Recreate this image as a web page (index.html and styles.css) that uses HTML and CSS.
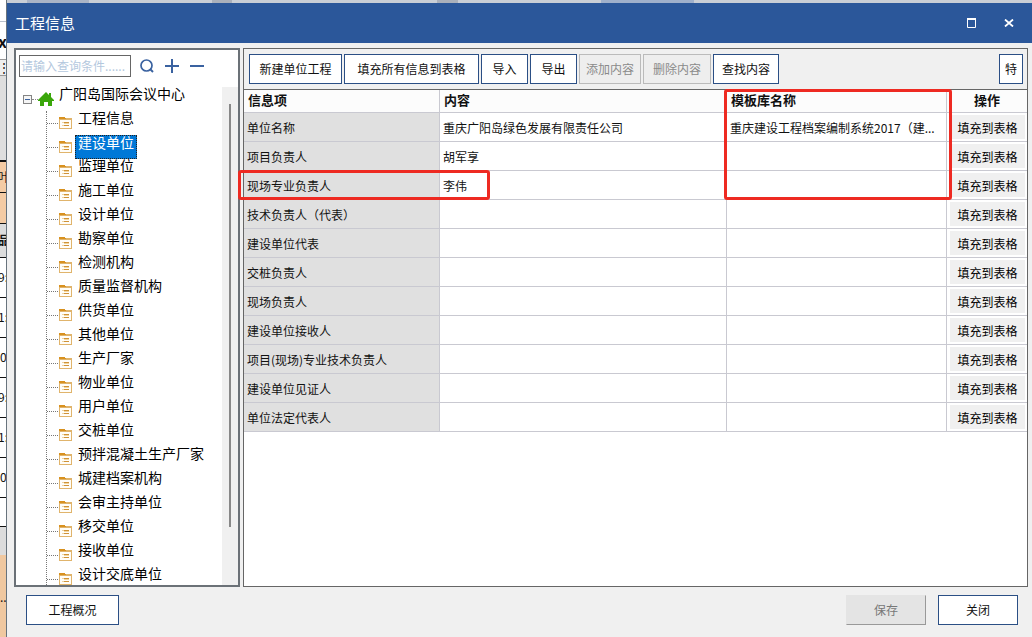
FILE: index.html
```html
<!DOCTYPE html>
<html lang="zh-CN">
<head>
<meta charset="utf-8">
<title>工程信息</title>
<link rel="stylesheet" href="styles.css">
</head>
<body>
<svg class="defs" aria-hidden="true">
  <symbol id="folder" viewBox="0 0 13 12">
    <path d="M0 1h13v11H0z" fill="#e0b46c"/>
    <path d="M6 0h7v1H6z" fill="#fff"/>
    <path d="M1 3h11v8H1z" fill="#fffdf8"/>
    <path d="M0 0h6v1h1v1H0z" fill="#d8911f"/>
    <path d="M3 5h2v1H3zM3 8h2v1H3z" fill="#edd3a2"/>
    <path d="M5 5h5v1H5zM5 8h5v1H5z" fill="#cf9238"/>
    <path d="M5 6h5v1H5z" fill="#f3d79c"/>
  </symbol>
</svg>
<div class="screen">
  <div class="sheet" aria-hidden="true">
    <div class="cell cell-top"></div>
    <div class="cell cell-name">x</div>
    <div class="cell cell-tool">⋮</div>
    <div class="cell cell-head">纟</div>
    <div class="cell cell-peach">叶</div>
    <div class="cell cell-peach"></div>
    <div class="cell cell-gray">品</div>
    <div class="cell">9:</div>
    <div class="cell">1:</div>
    <div class="cell cell-end">0</div>
    <div class="cell">9:</div>
    <div class="cell">1:</div>
    <div class="cell cell-end">0</div>
    <div class="cell cell-short"></div>
    <div class="cell cell-band"></div>
    <div class="cell cell-rest">..</div>
  </div>
  <div class="backdrop">
    <div class="ribbon"></div>
    <main class="dialog">
      <header class="titlebar">
        <h1 class="title">工程信息</h1>
        <button class="win-btn" type="button" aria-label="最大化"><svg width="10" height="10" viewBox="0 0 10 10"><path d="M1.500 1v8.500h8V1" fill="none" stroke="#fff"/><path d="M1 0h9v2H1z" fill="#fff"/></svg></button>
        <button class="win-btn" type="button" aria-label="关闭窗口"><svg width="10" height="8" viewBox="0 0 10 8"><path d="M1 .500l8 7M9 .500l-8 7" stroke="#fff" stroke-width="1.800"/></svg></button>
      </header>
      <div class="content">
        <aside class="side">
          <div class="search">
            <input class="search-box" type="text" placeholder="请输入查询条件......" aria-label="查询条件">
            <button class="icon-btn" type="button" aria-label="查询"><svg width="16" height="16" viewBox="0 0 16 16"><circle cx="7.500" cy="7.500" r="5.500" fill="none" stroke="#3a62a0" stroke-width="1.700"/><path d="M11 11l3 3" stroke="#3a62a0" stroke-width="2"/></svg></button>
            <button class="icon-btn" type="button" aria-label="展开"><svg width="16" height="16" viewBox="0 0 16 16"><path d="M1 8h14M8 1v14" stroke="#3a62a0" stroke-width="2"/></svg></button>
            <button class="icon-btn" type="button" aria-label="收起"><svg width="16" height="16" viewBox="0 0 16 16"><path d="M1 8h14" stroke="#3a62a0" stroke-width="2"/></svg></button>
          </div>
          <div class="tree-wrap">
            <div class="tree">
              <div class="root">
                <svg class="toggle" width="9" height="9" viewBox="0 0 9 9"><rect x=".5" y=".5" width="8" height="8" fill="#f5f5f5" stroke="#848484"/><path d="M2 4.500h5" stroke="#3a62a0"/></svg>
                <span class="root-link"></span>
                <svg class="home" width="16" height="16" viewBox="0 0 16 16"><path d="M8 1L0 9v1h2v5h4v-4h4v4h4v-5h2V9l-3-3V2h-2v2z" fill="#3aa60a"/></svg>
                <span class="root-name">广阳岛国际会议中心</span>
              </div>
              <ul class="items">
                <li class="item"><svg class="folder"><use href="#folder"/></svg><span class="name">工程信息</span></li>
                <li class="item"><svg class="folder"><use href="#folder"/></svg><span class="name selected">建设单位</span></li>
                <li class="item"><svg class="folder"><use href="#folder"/></svg><span class="name">监理单位</span></li>
                <li class="item"><svg class="folder"><use href="#folder"/></svg><span class="name">施工单位</span></li>
                <li class="item"><svg class="folder"><use href="#folder"/></svg><span class="name">设计单位</span></li>
                <li class="item"><svg class="folder"><use href="#folder"/></svg><span class="name">勘察单位</span></li>
                <li class="item"><svg class="folder"><use href="#folder"/></svg><span class="name">检测机构</span></li>
                <li class="item"><svg class="folder"><use href="#folder"/></svg><span class="name">质量监督机构</span></li>
                <li class="item"><svg class="folder"><use href="#folder"/></svg><span class="name">供货单位</span></li>
                <li class="item"><svg class="folder"><use href="#folder"/></svg><span class="name">其他单位</span></li>
                <li class="item"><svg class="folder"><use href="#folder"/></svg><span class="name">生产厂家</span></li>
                <li class="item"><svg class="folder"><use href="#folder"/></svg><span class="name">物业单位</span></li>
                <li class="item"><svg class="folder"><use href="#folder"/></svg><span class="name">用户单位</span></li>
                <li class="item"><svg class="folder"><use href="#folder"/></svg><span class="name">交桩单位</span></li>
                <li class="item"><svg class="folder"><use href="#folder"/></svg><span class="name">预拌混凝土生产厂家</span></li>
                <li class="item"><svg class="folder"><use href="#folder"/></svg><span class="name">城建档案机构</span></li>
                <li class="item"><svg class="folder"><use href="#folder"/></svg><span class="name">会审主持单位</span></li>
                <li class="item"><svg class="folder"><use href="#folder"/></svg><span class="name">移交单位</span></li>
                <li class="item"><svg class="folder"><use href="#folder"/></svg><span class="name">接收单位</span></li>
                <li class="item"><svg class="folder"><use href="#folder"/></svg><span class="name">设计交底单位</span></li>
              </ul>
            </div>
            <div class="scrollbar"><div class="thumb"></div></div>
          </div>
        </aside>
        <section class="main">
          <div class="toolbar">
            <button class="btn btn-new" type="button">新建单位工程</button>
            <button class="btn btn-wide" type="button">填充所有信息到表格</button>
            <button class="btn btn-short" type="button">导入</button>
            <button class="btn btn-short" type="button">导出</button>
            <button class="btn btn-tight" type="button" disabled>添加内容</button>
            <button class="btn" type="button" disabled>删除内容</button>
            <button class="btn btn-snug" type="button">查找内容</button>
            <button class="btn btn-more" type="button">特</button>
          </div>
          <table class="grid">
            <colgroup><col class="col-key"><col><col class="col-lib"><col class="col-act"></colgroup>
            <thead>
              <tr><th scope="col">信息项</th><th scope="col">内容</th><th class="marked" scope="col">模板库名称<span class="mark mark-lib"></span></th><th class="act-head" scope="col">操作</th></tr>
            </thead>
            <tbody>
              <tr><th scope="row">单位名称</th><td>重庆广阳岛绿色发展有限责任公司</td><td>重庆建设工程档案编制系统2017（建...</td><td class="act"><button class="fill" type="button">填充到表格</button></td></tr>
              <tr><th scope="row">项目负责人</th><td>胡军享</td><td></td><td class="act"><button class="fill" type="button">填充到表格</button></td></tr>
              <tr><th class="marked" scope="row">现场专业负责人<span class="mark mark-row"></span></th><td>李伟</td><td></td><td class="act"><button class="fill" type="button">填充到表格</button></td></tr>
              <tr><th scope="row">技术负责人（代表）</th><td></td><td></td><td class="act"><button class="fill" type="button">填充到表格</button></td></tr>
              <tr><th scope="row">建设单位代表</th><td></td><td></td><td class="act"><button class="fill" type="button">填充到表格</button></td></tr>
              <tr><th scope="row">交桩负责人</th><td></td><td></td><td class="act"><button class="fill" type="button">填充到表格</button></td></tr>
              <tr><th scope="row">现场负责人</th><td></td><td></td><td class="act"><button class="fill" type="button">填充到表格</button></td></tr>
              <tr><th scope="row">建设单位接收人</th><td></td><td></td><td class="act"><button class="fill" type="button">填充到表格</button></td></tr>
              <tr><th scope="row">项目(现场)专业技术负责人</th><td></td><td></td><td class="act"><button class="fill" type="button">填充到表格</button></td></tr>
              <tr><th scope="row">建设单位见证人</th><td></td><td></td><td class="act"><button class="fill" type="button">填充到表格</button></td></tr>
              <tr><th scope="row">单位法定代表人</th><td></td><td></td><td class="act"><button class="fill" type="button">填充到表格</button></td></tr>
            </tbody>
          </table>
        </section>
      </div>
      <footer class="footer">
        <button class="btn btn-overview" type="button">工程概况</button>
        <button class="btn btn-foot btn-save" type="button" disabled>保存</button>
        <button class="btn btn-foot" type="button">关闭</button>
      </footer>
    </main>
  </div>
</div>
</body>
</html>
```
FILE: styles.css
```css
* { box-sizing: border-box; }

body {
  margin: 0;
  font-family: "Noto Sans CJK SC", "Liberation Sans", sans-serif;
  font-size: 12px;
  color: #111;
}

button, input { font: inherit; color: inherit; }

.defs { display: none; }

.screen {
  display: grid;
  grid-template-columns: 7px minmax(0, 1fr);
  height: 100vh;
  overflow: hidden;
}

/* spreadsheet edge behind the dialog */
.sheet {
  display: flex;
  flex-direction: column;
  overflow: hidden;
  border-right: 1px solid #68737d;
  background: #fff;
}

.cell {
  flex: none;
  height: 40px;
  border-bottom: 1px solid #111;
  overflow: hidden;
  line-height: 38px;
  text-indent: -2px;
  white-space: nowrap;
}

.cell-top { height: 22px; border-color: #b9c0cc; }
.cell-name { height: 38px; border-color: #999; font-size: 16px; font-weight: 700; }
.cell-tool { height: 16px; border-color: #999; background: #eee; line-height: 14px; }
.cell-head { height: 101px; border-bottom-width: 2px; background: #dedede; font-size: 22px; line-height: 64px; text-indent: -14px; }
.cell-head { height: 86px; }
.cell-peach { height: 31px; background: #f4cba4; line-height: 30px; }
.cell-gray { height: 34px; background: #dcdcdc; font-weight: 700; line-height: 32px; }
.cell-end { text-indent: 0; }
.cell-short { height: 29px; }
.cell-band { height: 28px; border: 0; background: #dcdcdc; }
.cell-rest { flex: 1; border: 0; background: #f0c8a0; line-height: 84px; text-indent: 0; }

.backdrop { display: flex; flex-direction: column; min-height: 0; }

.ribbon {
  flex: none;
  height: 3px;
  background: linear-gradient(90deg, #c9ced6 0 2%, #aab4c6 2% 8%, #c9ced6 8% 20%, #aab0bb 20% 22%, #c9ced6 22% 42%, #aab0bb 42% 44%, #c9ced6 44% 58%, #9fb0cb 58% 67%, #c9ced6 67%);
}

.dialog {
  display: flex;
  flex: 1;
  flex-direction: column;
  min-height: 0;
  background: #f0f0f0;
}

.titlebar {
  display: flex;
  flex: none;
  align-items: center;
  height: 40px;
  padding: 0 10px 0 8px;
  background: #2b579a;
  color: #fff;
}

.title { flex: 1; margin: 0; font-size: 15px; font-weight: 400; line-height: 20px; }

.win-btn {
  display: grid;
  place-items: center;
  width: 26px;
  height: 24px;
  margin-left: 12px;
  padding: 0;
  border: 0;
  background: none;
}

.content {
  display: grid;
  grid-template-columns: 226px minmax(0, 1fr);
  gap: 3px;
  flex: 1;
  min-height: 0;
  padding: 5px 4px 0 7px;
}

.side {
  display: flex;
  flex-direction: column;
  min-height: 0;
  border: 2px solid #6b7177;
  background: #fff;
}

.search {
  display: flex;
  flex: none;
  align-items: center;
  gap: 9px;
  height: 37px;
  padding: 0 3px 5px;
}

.search-box {
  width: 112px;
  height: 22px;
  margin-right: -1px;
  padding: 0 0 2px 1px;
  border: 1px solid #666;
  background: #fff;
}

.search-box::placeholder { color: #b4c8de; opacity: 1; }

.icon-btn { display: grid; width: 16px; height: 16px; padding: 0; border: 0; background: none; }

.tree-wrap { display: flex; flex: 1; min-height: 0; }
.tree { flex: 1; min-width: 0; overflow: hidden; padding-left: 7px; color: #000; font-size: 14px; line-height: 12px; }

.root { display: flex; align-items: center; height: 24px; }
.root-link { width: 6px; border-top: 1px dotted #888; }
.home { flex: none; }
.root-name { align-self: flex-start; padding-left: 5px; white-space: nowrap; }

.items { margin: 0 0 0 23px; padding: 0; border-left: 1px dotted #777; list-style: none; }
.item { display: flex; align-items: center; height: 24px; }
.item::before { width: 11px; border-top: 1px dotted #777; content: ""; }
.folder { flex: none; width: 13px; height: 12px; margin-left: 1px; }
.name { height: 24px; margin-left: 3px; padding: 0 3px; white-space: nowrap; }
.selected { outline: 1px dotted #222; outline-offset: -1px; background: #0078d7; color: #fff; line-height: 14px; }

.scrollbar { flex: none; width: 16px; padding: 17px 7px 0; background: #f0f0f0; }
.thumb { height: 88%; background: #888; }

.main {
  display: flex;
  flex-direction: column;
  min-width: 0;
  min-height: 0;
  border: 1px solid #666;
  background: #fff;
}

.toolbar {
  display: flex;
  flex: none;
  align-items: center;
  gap: 2px;
  height: 41px;
  padding: 0 4px 0 5px;
  border-bottom: 1px solid #666;
  background: #f0f0f0;
}

.btn {
  height: 30px;
  padding: 0 9px;
  border: 1px solid #2b4f85;
  background: #fff;
  line-height: 16px;
  white-space: nowrap;
}

.btn:disabled { border-color: #bbb; background: #eee; color: #8a8a8a; }
.btn-new { min-width: 93px; }
.btn-wide { padding: 0 12px; min-width: 135px; }
.btn-short { min-width: 47px; }
.btn-tight { padding: 0 6px; }
.btn-snug { padding: 0 8px; }
.btn-more { margin-left: auto; padding: 0 5px; }

.grid { width: 100%; border-collapse: separate; border-spacing: 0; table-layout: fixed; }
.col-key { width: 196px; }
.col-lib { width: 220px; }
.col-act { width: 80px; }

.grid th, .grid td {
  height: 29px;
  padding: 2px 3px 0;
  border-right: 1px solid #c9c9d1;
  border-bottom: 1px solid #c9c9d1;
  font-weight: 400;
  line-height: 16px;
  text-align: left;
  white-space: nowrap;
}

.grid thead th { height: 23px; padding: 0 4px 2px; background: #fcfcfc; font-size: 13px; font-weight: 700; }
.grid tbody th { background: #e0e0e0; }
.grid tr > :last-child { border-right: 0; }
.grid thead .act-head { padding: 0 0 2px; text-align: center; }
.grid .act { padding: 0 2px 0 3px; }

.fill {
  display: block;
  width: 100%;
  height: 24px;
  padding: 2px 0 0;
  border: 0;
  background: #f0f0f0;
  color: #000;
}

/* highlight frames laid over the table */
.marked { position: relative; }
.mark { position: absolute; z-index: 1; border: 3px solid #ee2a22; border-radius: 3px; pointer-events: none; }
.mark-lib { top: -1px; left: -3px; right: -6px; height: 111px; }
.mark-row { top: -1px; left: -6px; right: -51px; height: 30px; }

.footer {
  display: flex;
  flex: none;
  align-items: center;
  gap: 12px;
  height: 50px;
  padding: 0 14px 4px 19px;
}

.btn-overview { min-width: 93px; margin-right: auto; }
.btn-foot { min-width: 80px; }
.btn-save:disabled { border-color: #e4e4e4 #999 #999 #e4e4e4; background: #e4e4e4; color: #777; }
```
